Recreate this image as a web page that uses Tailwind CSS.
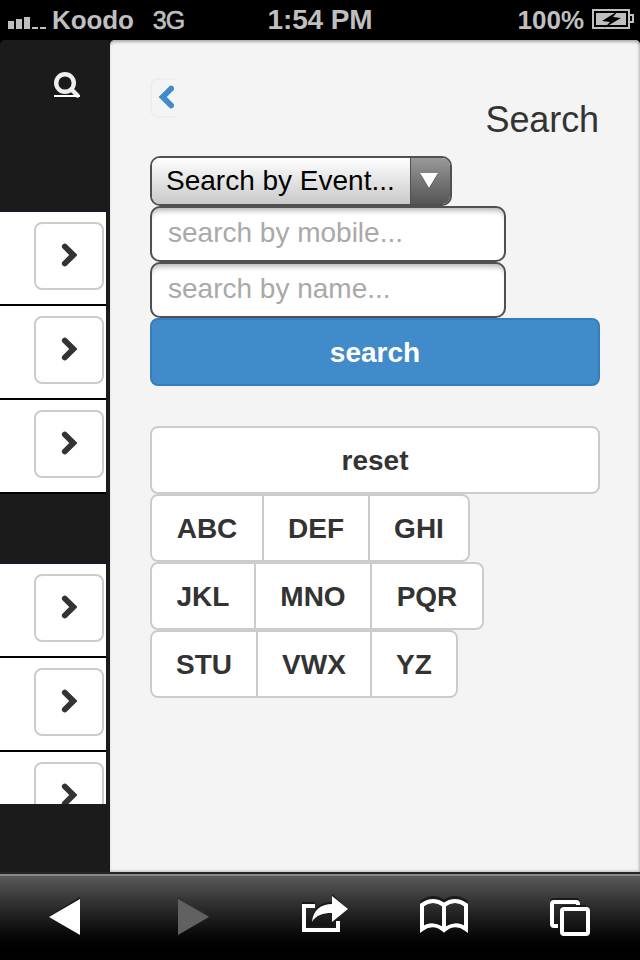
<!DOCTYPE html>
<html lang="en">
<head>
<meta charset="utf-8">
<title>Search</title>
<script src="https://cdn.jsdelivr.net/npm/@tailwindcss/browser@4"></script>
</head>
<body class="w-[640px] h-[960px] overflow-hidden bg-black font-['Liberation_Sans',Arial,sans-serif] flex flex-col text-[28px] leading-[40px]">
<svg class="hidden"><defs><symbol id="chev" viewBox="0 0 16 26"><path d="M3.800 3.500 12.300 12 3.800 20.500" fill="none" stroke="#333" stroke-width="5.800" stroke-linecap="round" stroke-linejoin="miter"/></symbol></defs></svg>

<header class="h-10 shrink-0 grid grid-cols-[1fr_auto_1fr] items-center text-[#bfbfbf] font-bold whitespace-nowrap">
  <div class="flex items-center pl-2">
    <svg class="w-[38px] h-10" viewBox="0 0 38 40" fill="#bfbfbf"><path d="M0 21h6v8H0zM8 19h6v10H8zM16 17h6v12h-6zM24 27h6v2h-6zM32 27h6v2h-6z"/></svg>
    <span class="ml-[6px] text-[26px] tracking-[-0.1px]">Koodo</span>
    <span class="ml-[19px] text-[25px] font-normal tracking-[-1px] [-webkit-text-stroke:0.6px_#bfbfbf]">3G</span>
  </div>
  <div class="text-[28px] tracking-[-0.1px]">1:54 PM</div>
  <div class="flex items-center justify-end pr-[6px]">
    <span class="text-[26px] mr-2">100%</span>
    <svg class="w-[42px] h-10" viewBox="0 0 42 40"><path d="M1 10h36v18H1z" fill="none" stroke="#bfbfbf" stroke-width="2"/><path d="M4 13h30v12H4z" fill="#bfbfbf"/><path d="M38 15h3v7h-3" fill="none" stroke="#bfbfbf" stroke-width="2"/><path d="M26 11 10 21l8 1-6 6 17-10-8-1z" fill="#000"/></svg>
  </div>
</header>

<main class="h-[832px] shrink-0 flex bg-[#1b1b1b] rounded-t-[5px]">
  <aside class="w-[110px] shrink-0 flex flex-col">
    <div class="h-[170px] shrink-0 pl-[54px] pt-[31px]">
      <svg class="w-[27px] h-[28px]" viewBox="0 0 27 28" fill="none" stroke="#eee"><circle cx="11" cy="12" r="8.800" stroke-width="4.400"/><path d="M18 19 23.500 24.500" stroke-width="4.500" stroke-linecap="round"/><path d="M0 25h26" stroke-width="2" stroke="#fff"/></svg>
    </div>
    <div class="w-[106px] shrink-0 border-t-2 border-[#1b1628]">
      <div class="h-[94px] bg-white border-b-2 border-black flex justify-end pr-[2px] pt-[10px]"><div class="w-[70px] h-[68px] rounded-lg border-2 border-[#ccc] flex items-center justify-center"><svg class="w-4 h-[26px]"><use href="#chev"/></svg></div></div>
      <div class="h-[94px] bg-white border-b-2 border-black flex justify-end pr-[2px] pt-[10px]"><div class="w-[70px] h-[68px] rounded-lg border-2 border-[#ccc] flex items-center justify-center"><svg class="w-4 h-[26px]"><use href="#chev"/></svg></div></div>
      <div class="h-[94px] bg-white border-b-2 border-black flex justify-end pr-[2px] pt-[10px]"><div class="w-[70px] h-[68px] rounded-lg border-2 border-[#ccc] flex items-center justify-center"><svg class="w-4 h-[26px]"><use href="#chev"/></svg></div></div>
    </div>
    <div class="w-[106px] h-[242px] shrink-0 mt-[68px] border-t-2 border-[#1b1628] overflow-hidden">
      <div class="h-[94px] bg-white border-b-2 border-black flex justify-end pr-[2px] pt-[10px]"><div class="w-[70px] h-[68px] rounded-lg border-2 border-[#ccc] flex items-center justify-center"><svg class="w-4 h-[26px]"><use href="#chev"/></svg></div></div>
      <div class="h-[94px] bg-white border-b-2 border-black flex justify-end pr-[2px] pt-[10px]"><div class="w-[70px] h-[68px] rounded-lg border-2 border-[#ccc] flex items-center justify-center"><svg class="w-4 h-[26px]"><use href="#chev"/></svg></div></div>
      <div class="h-[94px] bg-white border-b-2 border-black flex justify-end pr-[2px] pt-[10px]"><div class="w-[70px] h-[68px] rounded-lg border-2 border-[#ccc] flex items-center justify-center"><svg class="w-4 h-[26px]"><use href="#chev"/></svg></div></div>
    </div>
  </aside>

  <section class="w-[530px] px-10 bg-[#f4f4f4] rounded-t-[5px] shadow-[inset_0_3px_3px_-1px_#aaa,inset_-2px_-2px_3px_-1px_#bbb] text-[#333]">
    <div class="h-[116px] flex justify-between">
      <div class="mt-[38px] w-[26px] h-10 border-2 border-r-0 border-[#eee] rounded-l-lg flex items-center pl-[6px]"><svg class="w-4 h-[26px] shrink-0" viewBox="0 0 16 26"><path d="M13.200 3.500 4.700 12 13.200 20.500" fill="none" stroke="#428bca" stroke-width="5.800" stroke-linecap="round"/></svg></div>
      <h1 class="text-[36px] mt-[60px] mr-px tracking-[-0.1px]">Search</h1>
    </div>
    <div class="w-[302px] h-[50px] border-2 border-[#505050] rounded-[10px] flex overflow-hidden text-black">
      <div class="w-[258px] bg-linear-to-b from-white to-[#c9c9c9] pl-[14px] leading-[45px] whitespace-nowrap">Search by Event...</div>
      <div class="w-10 border-l border-[#505050] bg-linear-to-b from-[#999] to-[#555] flex justify-center pr-[3px] pt-[14px]"><svg class="w-[18px] h-[17px]" viewBox="0 0 18 17"><path d="M0 2h18L9 17z" fill="#444"/><path d="M0 1h18L9 16z" fill="#fff"/></svg></div>
    </div>
    <div class="w-[356px] h-14 border-2 border-[#505050] rounded-[10px] bg-white shadow-[inset_0_6px_5px_-3px_#bbb] pl-4 leading-[50px] text-[#a9a9a9]">search by mobile...</div>
    <div class="w-[356px] h-14 border-2 border-[#505050] rounded-[10px] bg-white shadow-[inset_0_6px_5px_-3px_#bbb] pl-4 leading-[50px] text-[#a9a9a9]">search by name...</div>
    <div class="h-[68px] border-2 border-[#357ebd] rounded-lg bg-[#428bca] text-white font-bold text-center leading-[65px]">search</div>
    <div class="mt-10 h-[68px] border-2 border-[#ccc] rounded-lg bg-white font-bold text-center leading-[65px]">reset</div>
    <div class="w-fit h-[68px] border-2 border-[#ccc] rounded-lg bg-white font-bold text-center leading-[65px] flex divide-x-2 divide-[#ccc]"><div class="w-[112px]">ABC</div><div class="w-[106px]">DEF</div><div class="w-[98px]">GHI</div></div>
    <div class="w-fit h-[68px] border-2 border-[#ccc] rounded-lg bg-white font-bold text-center leading-[65px] flex divide-x-2 divide-[#ccc]"><div class="w-[104px]">JKL</div><div class="w-[116px]">MNO</div><div class="w-[110px]">PQR</div></div>
    <div class="w-fit h-[68px] border-2 border-[#ccc] rounded-lg bg-white font-bold text-center leading-[65px] flex divide-x-2 divide-[#ccc]"><div class="w-[106px]">STU</div><div class="w-[114px]">VWX</div><div class="w-[84px]">YZ</div></div>
  </section>
</main>

<footer class="h-[88px] shrink-0 border-t-2 border-[#252525] bg-linear-to-b from-[#5c5c5c] to-black">
  <div class="h-[86px] border-t-2 border-[#888] flex items-center pl-[49px] pb-[2px]">
    <svg class="w-8 h-[46px]" viewBox="0 0 32 46"><path d="M0 22 31 3v36z" fill="#1a1a1a"/><path d="M0 23 31 5v36z" fill="#fff"/></svg>
    <svg class="ml-24 w-8 h-[46px]" viewBox="0 0 32 46"><path d="M32 22 1 3v36z" fill="#333"/><path d="M32 23 1 5v36z" fill="#616161"/></svg>
    <svg class="ml-[92px] w-[48px] h-[46px]" viewBox="0 0 48 46"><path d="M14 10H3v24h34v-8" fill="none" stroke="#1a1a1a" stroke-width="4"/><path d="M14 12H3v24h34v-9" fill="none" stroke="#fff" stroke-width="4"/><path d="M11 28C10 15 19 8 31 8V0l16 15-16 14v-9c-9 0-16 2-20 8z" fill="#1a1a1a"/><path d="M11 28C12 16 20 10 31 10V2l16 13-16 13v-9c-9 0-16 2-20 9z" fill="#fff"/></svg>
    <svg class="ml-[70px] w-[50px] h-[46px]" viewBox="0 0 50 46" fill="none" stroke-width="4"><path d="M3 33V10C10 5 18 5 25 10c7-5 15-5 22 0v23" stroke="#1a1a1a" transform="translate(0 -2)"/><path d="M3 35V11C10 6 18 6 25 11c7-5 15-5 22 0v24c-7-5-15-5-22 1-7-6-15-6-22-1zM25 10v27" stroke="#fff"/></svg>
    <svg class="ml-20 w-[42px] h-[46px]" viewBox="0 0 42 46" fill="none" stroke-width="4"><path d="M3 28V8a2 2 0 0 1 2-2h22a2 2 0 0 1 2 2v3M13 30V15a2 2 0 0 1 2-2h22" stroke="#1a1a1a"/><path d="M9 32H5a2 2 0 0 1-2-2V10a2 2 0 0 1 2-2h22a2 2 0 0 1 2 2v1" stroke="#fff"/><rect x="13" y="15" width="26" height="25" rx="2" stroke="#fff"/></svg>
  </div>
</footer>
</body>
</html>
